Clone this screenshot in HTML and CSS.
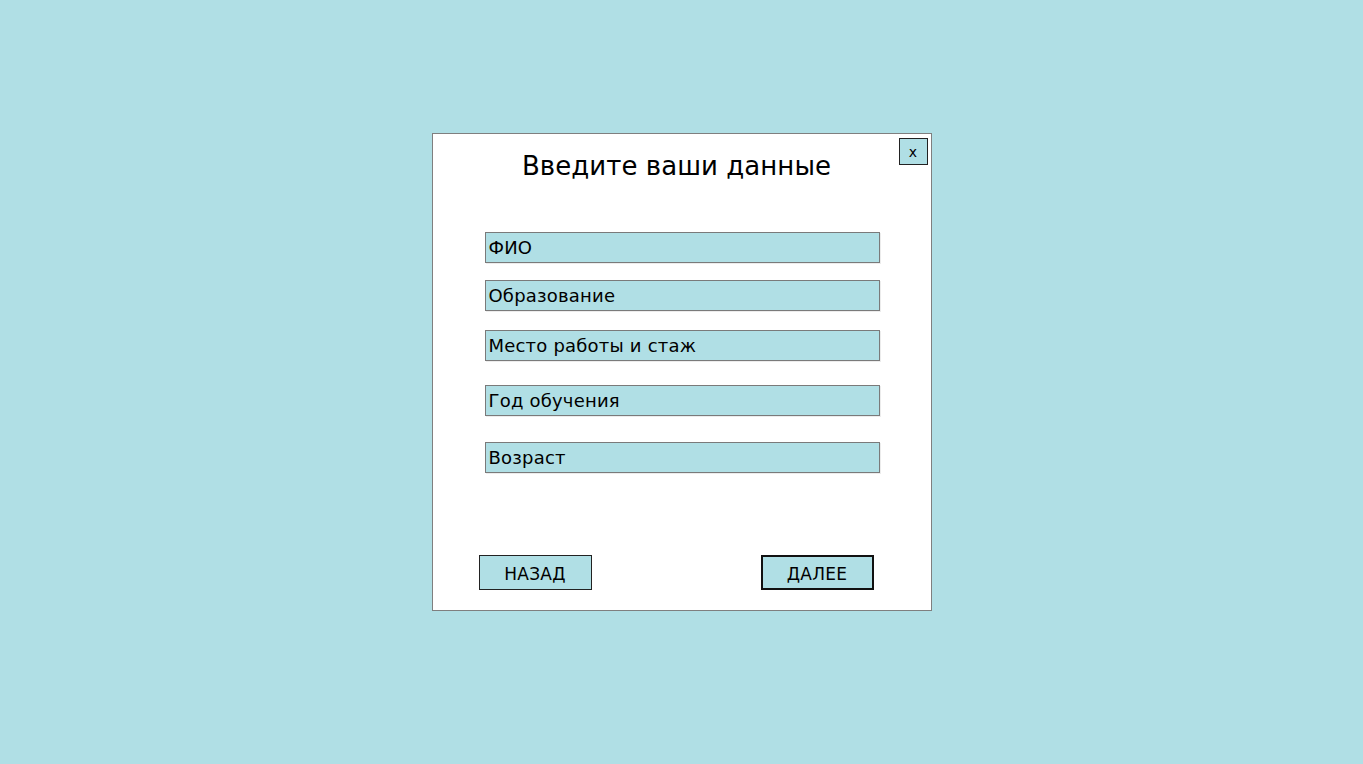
FILE: index.html
```html
<!DOCTYPE html>
<html lang="ru">
<head>
<meta charset="utf-8">
<title>Введите ваши данные</title>
<link rel="stylesheet" href="styles.css">
</head>
<body>
<div class="page">
  <div class="dialog">
    <button class="close" type="button">x</button>
    <h1 class="title">Введите ваши данные</h1>
    <div class="fields">
      <div class="field f1">ФИО</div>
      <div class="field f2">Образование</div>
      <div class="field f3">Место работы и стаж</div>
      <div class="field f4">Год обучения</div>
      <div class="field f5">Возраст</div>
    </div>
    <div class="actions">
      <button class="btn back" type="button">НАЗАД</button>
      <button class="btn next" type="button">ДАЛЕЕ</button>
    </div>
  </div>
</div>
</body>
</html>
```

FILE: styles.css
```css
* { box-sizing: border-box; }
html, body {
  margin: 0;
  padding: 0;
  height: 100%;
}
body {
  background: #b0dfe5;
  font-family: "DejaVu Sans", Verdana, sans-serif;
  color: #000;
}
.page {
  display: flex;
  justify-content: center;
  padding-top: 133px;
}
.dialog {
  position: relative;
  width: 500px;
  height: 478px;
  background: #fff;
  border: 1px solid #7f7f7f;
  display: flex;
  flex-direction: column;
}
.close {
  position: absolute;
  top: 4px;
  right: 3px;
  width: 29px;
  height: 27px;
  background: #b0dfe5;
  border: 1px solid #222;
  font-family: "DejaVu Sans", sans-serif;
  font-size: 14px;
  line-height: 1;
  padding: 0;
  color: #000;
}
.title {
  margin: 0;
  margin-top: 16px;
  padding-right: 10px;
  text-align: center;
  font-weight: normal;
  font-size: 26px;
  letter-spacing: 0.05px;
  line-height: 32px;
}
.fields {
  display: flex;
  flex-direction: column;
  padding-left: 52px;
  margin-top: 50px;
}
.field {
  width: 395px;
  height: 31px;
  background: #b0dfe5;
  border: 1px solid #7a7a7a;
  box-shadow: 1px 1px 0 #ececec;
  font-size: 18px;
  letter-spacing: 0.2px;
  line-height: 29px;
  padding-left: 3px;
}
.f2 { margin-top: 17px; }
.f3 { margin-top: 19px; }
.f4 { margin-top: 24px; }
.f5 { margin-top: 26px; }
.actions {
  display: flex;
  justify-content: space-between;
  padding-left: 46px;
  padding-right: 57px;
  margin-top: auto;
  margin-bottom: 20px;
}
.btn {
  width: 113px;
  height: 35px;
  background: #b0dfe5;
  font-family: "DejaVu Sans", sans-serif;
  font-size: 17px;
  letter-spacing: 0.3px;
  color: #000;
  padding: 0;
  padding-top: 2px;
}
.back { border: 1px solid #222; }
.next { border: 2px solid #111; }
```
